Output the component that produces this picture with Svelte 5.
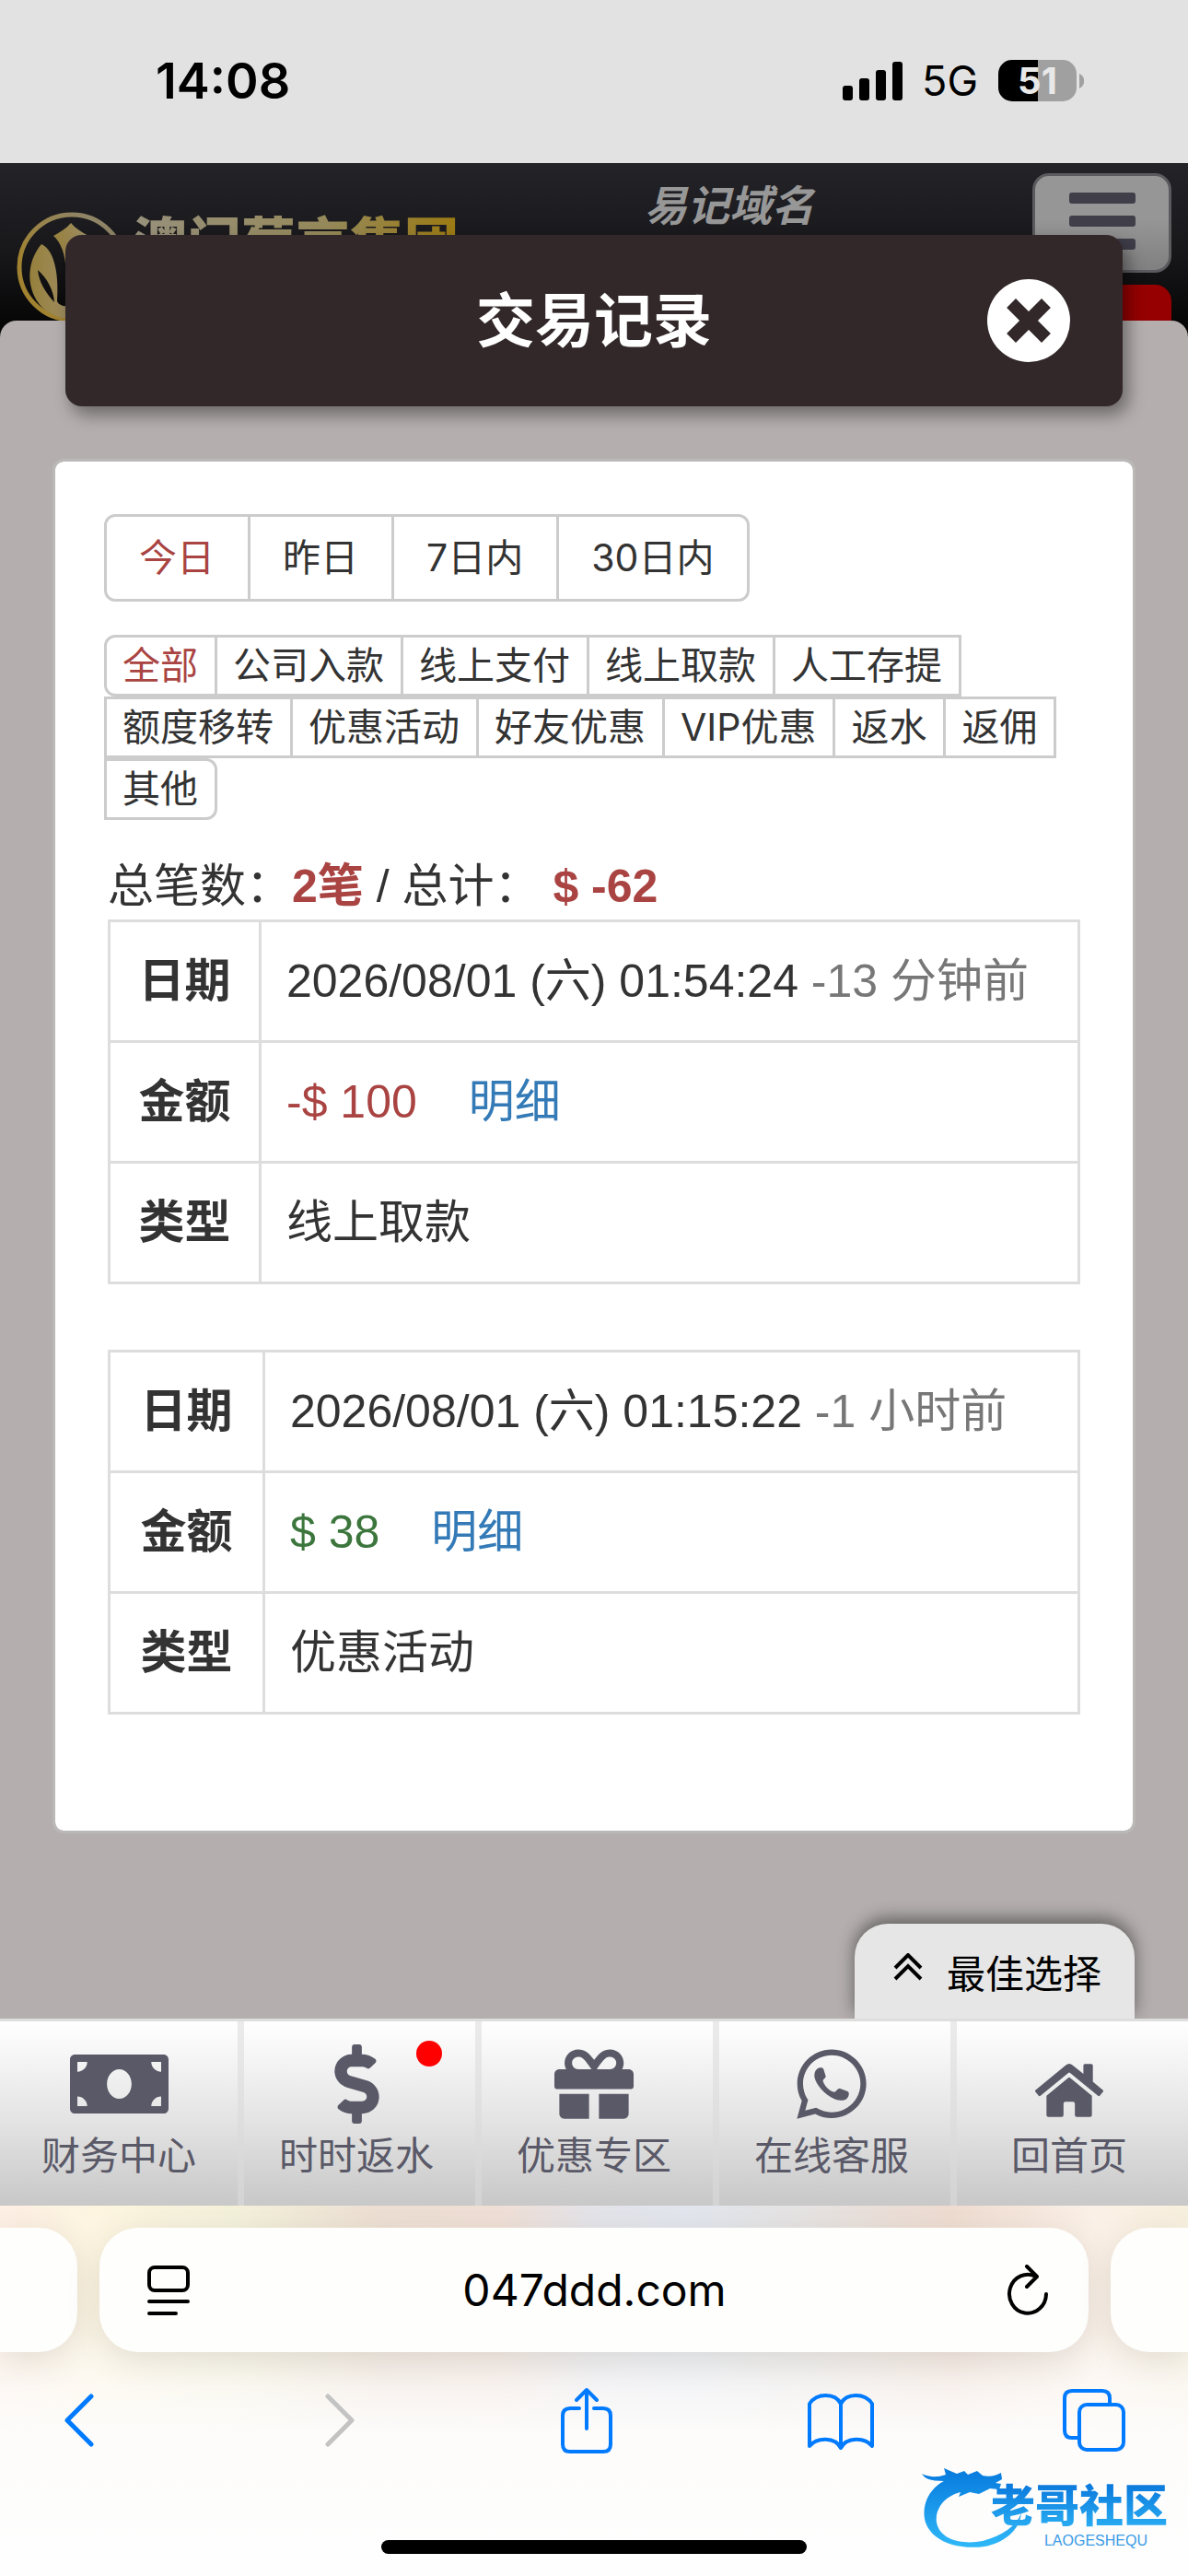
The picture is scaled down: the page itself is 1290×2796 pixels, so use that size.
<script>
  const ranges = ['今日', '昨日', '7日内', '30日内'];
  const kinds = [
    '全部', '公司入款', '线上支付', '线上取款', '人工存提',
    '额度移转', '优惠活动', '好友优惠', 'VIP优惠', '返水', '返佣', '其他'
  ];
  const records = [
    { date: '2026/08/01 (六) 01:54:24', ago: '-13 分钟前', amount: '-$ 100', out: true, type: '线上取款' },
    { date: '2026/08/01 (六) 01:15:22', ago: '-1 小时前', amount: '$ 38', out: false, type: '优惠活动' }
  ];
  let range = $state('今日');
  let kind = $state('全部');
  let address = $state('047ddd.com');
</script>

<div class="screen">
  <div class="status">
    <span class="time">14:08</span>
    <div class="signals">
      <svg class="bars" viewBox="0 0 66 42" aria-hidden="true">
        <rect x="0" y="26" width="11" height="16" rx="3" />
        <rect x="18" y="18" width="11" height="24" rx="3" />
        <rect x="36" y="9" width="11" height="33" rx="3" />
        <rect x="54" y="0" width="11" height="42" rx="3" />
      </svg>
      <span class="net">5G</span>
      <div class="battery"><span>51</span></div>
      <svg class="nub" viewBox="0 0 5 16" aria-hidden="true"><path d="M0 0C7 3 7 13 0 16Z" /></svg>
    </div>
  </div>

  <header class="site">
    <a class="brand" href="#home">
      <svg viewBox="0 0 120 120" aria-hidden="true">
        <defs>
          <linearGradient id="ring" x1="0" y1="1" x2="1" y2="0">
            <stop offset="0.3" stop-color="#a08230" />
            <stop offset="0.8" stop-color="#8f8465" />
          </linearGradient>
          <linearGradient id="leaf" x1="0" x2="1">
            <stop offset="0" stop-color="#97803c" />
            <stop offset="1" stop-color="#9f8f68" />
          </linearGradient>
        </defs>
        <circle cx="60" cy="60" r="57" fill="none" stroke="url(#ring)" stroke-width="5" />
        <path fill="url(#leaf)" d="M59 12C54 18 47 22 40 26C48 33 53 45 54 66H64C65 45 70 33 78 26C71 22 64 18 59 12Z" />
        <path fill="url(#leaf)" fill-rule="evenodd" d="M27 35C10 55 10 85 28 104C38 113 52 117 66 117V102C54 103 47 103 44 97C46 70 42 42 27 35ZM23 63C33 72 40 84 41 98C32 88 24 76 23 63Z" />
      </svg>
      <span>澳门葡京集团</span>
    </a>
    <span class="slogan">易记域名</span>
    <div class="side">
      <button class="menu" aria-label="菜单"><i></i><i></i><i></i></button>
      <div class="flag"></div>
    </div>
  </header>

  <div class="dialog-bar">
    <h1>交易记录</h1>
    <button class="close" aria-label="关闭">
      <svg viewBox="0 0 90 90" aria-hidden="true">
        <circle cx="45" cy="45" r="45" fill="#fff" />
        <path d="M31 31L59 59M59 31L31 59" stroke="#32282a" stroke-width="14" stroke-linecap="square" stroke-linejoin="round" />
      </svg>
    </button>
  </div>

  <main class="sheet">
    <section class="card">
      <div class="group days">
        {#each ranges as r}
          <button class:active={range === r} onclick={() => (range = r)}>{r}</button>
        {/each}
      </div>
      <div class="group kinds">
        {#each kinds as k}
          <button class:active={kind === k} onclick={() => (kind = k)}>{k}</button>
        {/each}
      </div>
      <p class="total">总笔数：<b>2笔</b> / 总计： <b>$ -62</b></p>
      {#each records as r}
        <table class:incoming={!r.out}>
          <tbody>
            <tr><th scope="row">日期</th><td>{r.date} <span class="ago">{r.ago}</span></td></tr>
            <tr>
              <th scope="row">金额</th>
              <td><span class={r.out ? 'out' : 'in'}>{r.amount}</span><a class="detail" href="#detail">明细</a></td>
            </tr>
            <tr><th scope="row">类型</th><td>{r.type}</td></tr>
          </tbody>
        </table>
      {/each}
    </section>
  </main>

  <nav class="tabs">
    <button class="best">
      <svg viewBox="0 0 32 30" aria-hidden="true"><path d="M2 16L16 2L30 16M2 28L16 14L30 28" fill="none" stroke="#000" stroke-width="4" /></svg>
      最佳选择
    </button>
    <a href="#finance">
      <svg class="money" viewBox="0 0 640 512" aria-hidden="true"><path d="M608 64H32C14.33 64 0 78.33 0 96v320c0 17.67 14.33 32 32 32h576c17.67 0 32-14.33 32-32V96c0-17.67-14.33-32-32-32zM48 400v-64c35.35 0 64 28.65 64 64H48zm0-224v-64h64c0 35.35-28.65 64-64 64zm272 176c-44.19 0-80-42.99-80-96 0-53.02 35.82-96 80-96s80 42.98 80 96c0 53.03-35.83 96-80 96zm272 48h-64c0-35.35 28.65-64 64-64v64zm0-224c-35.35 0-64-28.65-64-64h64v64z" /></svg>
      <span>财务中心</span>
    </a>
    <a href="#rebate">
      <svg class="dollar" viewBox="0 0 288 512" aria-hidden="true"><path d="M209.2 233.4l-108-31.6C88.7 198.2 80 186.5 80 173.5c0-16.3 13.2-29.5 29.5-29.5h66.3c12.2 0 24.2 3.7 34.2 10.5 6.1 4.1 14.3 3.1 19.5-2l34.8-34c7.1-6.9 6.1-18.4-1.8-24.5C238 74.8 207.4 64.1 176 64V16c0-8.8-7.2-16-16-16h-32c-8.8 0-16 7.2-16 16v48h-2.5C45.8 64-5.4 118.7.5 183.6c4.2 46.1 39.4 83.6 83.8 96.6l102.5 30c12.5 3.7 21.2 15.3 21.2 28.3 0 16.3-13.2 29.5-29.5 29.5h-66.3C100 368 88 364.3 78 357.5c-6.1-4.1-14.3-3.1-19.5 2l-34.8 34c-7.1 6.9-6.1 18.4 1.8 24.5 24.5 19.2 55.1 29.9 86.5 30v48c0 8.8 7.2 16 16 16h32c8.8 0 16-7.2 16-16v-48.2c46.6-.9 90.3-28.6 105.7-72.7 21.5-61.6-14.6-124.8-72.5-141.7z" /></svg>
      <span>时时返水</span>
      <i class="dot"></i>
    </a>
    <a href="#offers">
      <svg class="square" viewBox="0 0 512 512" aria-hidden="true"><path d="M32 448c0 17.7 14.3 32 32 32h160V320H32v128zm256 32h160c17.7 0 32-14.3 32-32V320H288v160zm192-320h-42.1c6.2-12.1 10.1-25.5 10.1-40 0-48.5-39.5-88-88-88-41.6 0-68.5 21.3-103 68.3-34.5-47-61.4-68.3-103-68.3-48.5 0-88 39.5-88 88 0 14.5 3.8 27.9 10.1 40H32c-17.7 0-32 14.3-32 32v80c0 8.8 7.2 16 16 16h480c8.8 0 16-7.2 16-16v-80c0-17.7-14.3-32-32-32zm-326.1 0c-22.1 0-40-17.9-40-40s17.9-40 40-40c19.9 0 34.6 3.3 86.1 80h-86.1zm206.1 0h-86.1c51.4-76.5 65.7-80 86.1-80 22.1 0 40 17.9 40 40s-17.9 40-40 40z" /></svg>
      <span>优惠专区</span>
    </a>
    <a href="#service">
      <svg class="square" viewBox="-32 0 512 512" aria-hidden="true">
        <path fill-rule="evenodd" d="M380.9 97.1C339 55.1 283.2 32 223.9 32c-122.4 0-222 99.6-222 222 0 39.1 10.2 77.3 29.6 111L0 480l117.7-30.9c32.4 17.7 68.9 27 106.1 27h.1c122.3 0 224.1-99.6 224.1-222 0-59.3-25.2-115-67.1-157zm-157 341.6c-33.2 0-65.7-8.9-94-25.7l-6.7-4-69.8 18.3L72 359.2l-4.4-7c-18.5-29.4-28.2-63.3-28.2-98.2 0-101.7 82.8-184.5 184.6-184.5 49.3 0 95.6 19.2 130.4 54.1 34.8 34.9 56.2 81.2 56.1 130.5 0 101.8-84.9 184.6-186.6 184.6z" />
        <path d="M128 160C140 147 166 148 171 158L186 206C188 216 168 226 168 236C176 262 206 300 240 308C252 308 262 284 276 284L328 304C342 312 336 340 320 352C300 366 262 364 236 350C180 322 124 262 114 214C110 190 116 170 128 160Z" />
      </svg>
      <span>在线客服</span>
    </a>
    <a href="#home">
      <svg class="home" viewBox="0 0 576 512" aria-hidden="true"><path d="M280.37 148.26L96 300.11V464a16 16 0 0 0 16 16l112.06-.29a16 16 0 0 0 15.92-16V368a16 16 0 0 1 16-16h64a16 16 0 0 1 16 16v95.64a16 16 0 0 0 16 16.05L464 480a16 16 0 0 0 16-16V300L295.67 148.26a12.19 12.19 0 0 0-15.3 0zM571.6 251.47L488 182.56V44.05a12 12 0 0 0-12-12h-56a12 12 0 0 0-12 12v72.61L318.47 43a48 48 0 0 0-61 0L4.34 251.47a12 12 0 0 0-1.6 16.9l25.5 31A12 12 0 0 0 45.15 301l235.22-193.74a12.19 12.19 0 0 1 15.3 0L530.9 301a12 12 0 0 0 16.9-1.6l25.5-31a12 12 0 0 0-1.7-16.93z" /></svg>
      <span>回首页</span>
    </a>
  </nav>

  <footer class="browser">
    <div class="pages">
      <div class="stub left"></div>
      <div class="url">
        <button aria-label="阅读器">
          <svg width="46" height="54" viewBox="0 0 46 54" fill="none" stroke="#000" stroke-width="4" stroke-linecap="round" aria-hidden="true"><rect x="2" y="2" width="42" height="25" rx="6" /><path d="M2 39H44M2 52H31" /></svg>
        </button>
        <input aria-label="网址" bind:value={address} />
        <button aria-label="刷新">
          <svg width="46" height="56" viewBox="0 0 46 56" fill="none" stroke="#000" stroke-width="4" stroke-linecap="round" stroke-linejoin="round" aria-hidden="true"><path d="M43 32A20 21 0 1 1 32 13M22 2L33 13L22 24" /></svg>
        </button>
      </div>
      <div class="stub right"></div>
    </div>
    <div class="tools">
      <button aria-label="后退"><svg width="32" height="72" viewBox="0 0 32 72"><path d="M29 10L3 36L29 62" stroke-width="5" /></svg></button>
      <button class="off" aria-label="前进" disabled><svg width="46" height="72" viewBox="-14 0 46 72"><path d="M3 10L29 36L3 62" stroke-width="5" /></svg></button>
      <button aria-label="分享"><svg width="56" height="72" viewBox="0 0 56 72"><path d="M20 23H10Q2 23 2 31V62Q2 70 10 70H46Q54 70 54 62V31Q54 23 46 23H36M28 45V3M17 14L28 3L39 14" /></svg></button>
      <button aria-label="书签"><svg width="72" height="72" viewBox="0 0 72 72"><path d="M36 18C30 6 10 6 2 18V64C10 54 30 54 36 66C42 54 62 54 70 64V18C62 6 42 6 36 18V65" /></svg></button>
      <button aria-label="标签页"><svg width="68" height="72" viewBox="0 0 68 72"><path d="M16 55H10Q2 55 2 47V12Q2 4 10 4H43Q51 4 51 12V18" /><rect x="18" y="19" width="48" height="49" rx="8" /></svg></button>
    </div>
    <div class="indicator"></div>
    <div class="mark">
      <svg viewBox="0 0 110 90" aria-hidden="true">
        <defs><linearGradient id="sea" x1="0" y1="0" x2="0" y2="1"><stop offset="0.1" stop-color="#0a7fe0" /><stop offset="1" stop-color="#2fb8f8" /></linearGradient></defs>
        <path fill="url(#sea)" d="M0 9C8 13 18 13 26 10L24 3L38 9L46 6L50 10L60 6L66 11C74 13 80 11 86 8L87 15L80 19L86 20L84 26L74 25L62 31L52 29L40 34L42 29C22 34 14 50 16 62C20 82 46 86 66 82C88 76 102 66 108 52C106 70 90 84 68 88C38 92 8 82 3 58C0 40 10 24 24 17C14 17 4 16 0 9Z" />
      </svg>
      <div><strong>老哥社区</strong><small>LAOGESHEQU</small></div>
    </div>
  </footer>
</div>

<style>
  :global(body) { margin: 0; }
  .screen {
    position: relative;
    display: flex;
    flex-direction: column;
    min-height: 100vh;
    overflow: hidden;
    color: #333;
    background: #fff;
    font-family: "Liberation Sans", "Noto Sans CJK SC", sans-serif;
    font-size: 50px;
  }
  button, input { font: inherit; color: inherit; margin: 0; padding: 0; border: 0; background: none; }
  a { color: inherit; text-decoration: none; }
  svg { display: block; flex: none; }

  .status {
    display: flex;
    justify-content: space-between;
    box-sizing: border-box;
    height: 177px;
    padding: 0 113px 2px 169px;
    align-items: center;
    background: #e2e2e2;
    color: #000;
    font-family: Inter, sans-serif;
  }
  .time { font-size: 54px; font-weight: 600; }
  .signals { display: flex; align-items: center; }
  .bars { width: 66px; height: 42px; }
  .net { margin: 0 22px 0 20px; font-size: 45px; }
  .battery {
    width: 85px;
    height: 45px;
    border-radius: 15px;
    background: linear-gradient(90deg, #000 51%, #a0a0a0 51%);
    color: #e8e8e8;
    font-size: 40px;
    font-weight: 700;
    line-height: 45px;
    text-align: center;
  }
  .nub { width: 5px; height: 16px; margin-left: 3px; fill: #a0a0a0; }

  .site {
    display: grid;
    grid-template-columns: repeat(3, minmax(0, 1fr));
    height: 189px;
    background: linear-gradient(#242328, #18181b 50%, #050505 95%);
  }
  .brand { display: flex; align-items: flex-start; gap: 6px; padding: 53px 0 0 18px; white-space: nowrap; }
  .brand svg { width: 120px; height: 120px; }
  .brand span {
    font: 900 59px/60px "Noto Sans CJK SC", sans-serif;
    background: linear-gradient(90deg, #98917c, #95895a 60%, #9c7a12);
    background-clip: text;
    color: transparent;
  }
  .slogan {
    padding: 12px 0 0 270px;
    font: italic 700 46px/62px "Noto Sans CJK SC", sans-serif;
    color: #979797;
    white-space: nowrap;
  }
  .side { display: flex; flex-direction: column; align-items: flex-end; gap: 13px; padding: 11px 18px 0 0; }
  .menu {
    display: flex;
    flex-direction: column;
    align-items: center;
    gap: 13px;
    box-sizing: border-box;
    width: 151px;
    height: 108px;
    padding-top: 18px;
    border: 3px solid #5b5b5f;
    border-radius: 18px;
    background: linear-gradient(#969696 45%, #808080);
  }
  .menu i { width: 72px; height: 12px; border-radius: 3px; background: #3f3e49; }
  .flag { width: 151px; flex: 1; border-radius: 18px 18px 0 0; background: #960000; }

  .dialog-bar {
    position: absolute;
    top: 255px;
    left: 71px;
    right: 71px;
    display: grid;
    grid-template-columns: 1fr auto 1fr;
    align-items: center;
    height: 186px;
    border-radius: 18px;
    background: #32282a;
    box-shadow: 6px 9px 18px rgba(0, 0, 0, 0.4);
  }
  h1 { grid-column: 2; margin: 0; padding-bottom: 10px; color: #fff; font: 700 64px/92px "Noto Sans CJK SC", sans-serif; }
  .close { justify-self: end; margin-right: 57px; }
  .close svg { width: 90px; height: 90px; }

  .sheet {
    flex: 1;
    margin-top: -18px;
    padding: 150px 57px;
    border-radius: 18px 18px 0 0;
    background: #b4aeae;
  }
  .card {
    padding: 57px 57px 126px;
    border: 3px solid #bbb8b8;
    border-radius: 12px;
    background: #fff;
    background-clip: padding-box;
  }
  .group { display: flex; flex-wrap: wrap; margin-left: -4px; padding-left: 3px; }
  .group button {
    margin-left: -3px;
    padding: 0 18px 0 17px;
    border: 3px solid #ccc;
    font: 41px/61px Inter, "Noto Sans CJK SC", sans-serif;
  }
  .group.days button { padding: 0 36px 0 35px; line-height: 89px; }
  .group button:first-child { border-radius: 12px 0 0 12px; }
  .group button:last-child { border-radius: 0 12px 12px 0; }
  .group .active { color: #a94442; }
  .kinds { margin-top: 36px; }
  .total { margin: 36px 0 0; line-height: 72px; white-space: pre-wrap; }
  .total b { color: #a94442; }

  table { width: 100%; border-collapse: collapse; table-layout: fixed; }
  table + table { margin-top: 71px; }
  th, td { box-sizing: border-box; height: 131px; padding: 0; border: 3px solid #ddd; line-height: 72px; }
  th { width: 164px; text-align: center; }
  .incoming th { width: 168px; }
  td { padding-left: 27px; text-align: left; white-space: nowrap; }
  .ago { color: #777; }
  .out { color: #a94442; }
  .in { color: #3c763d; }
  .detail { margin-left: 56px; color: #337ab7; }

  .tabs {
    position: relative;
    display: grid;
    grid-template-columns: repeat(5, 1fr);
    height: 200px;
    border-top: 3px solid #dedede;
    background: linear-gradient(#fff, #e3e3e3 55%, #c8c8c8);
    color: #5a5968;
    font: 42px/56px "Noto Sans CJK SC", sans-serif;
  }
  .tabs a {
    position: relative;
    display: grid;
    grid-template-rows: 115px 56px;
    justify-items: center;
    align-items: end;
  }
  .tabs a + a { background: linear-gradient(#ebebeb, #d3d3d3) left / 7px 100% no-repeat; }
  .tabs a svg { fill: #5a5968; }
  .money { width: 107px; height: 86px; margin-bottom: 4px; }
  .dollar { width: 49px; height: 86px; margin-bottom: 4px; }
  .square { width: 86px; height: 86px; margin-bottom: 4px; }
  .home { width: 74px; height: 66px; margin-bottom: 7px; }
  .dot { position: absolute; top: 21px; right: 36px; width: 28px; height: 28px; border-radius: 50%; background: #f00; }
  .tabs .best {
    position: absolute;
    right: 58px;
    bottom: 203px;
    display: flex;
    align-items: center;
    gap: 26px;
    height: 103px;
    padding: 0 36px 0 42px;
    border-radius: 36px 36px 0 0;
    background: #e6e6e6;
    color: #000;
    box-shadow: 0 -6px 18px rgba(0, 0, 0, 0.45);
    clip-path: inset(-40px -40px 0 -40px);
  }
  .best svg { width: 32px; height: 30px; margin-bottom: 10px; }

  .browser {
    position: relative;
    height: 402px;
    background:
      linear-gradient(rgba(253, 253, 253, 0), rgba(253, 253, 253, 0.2) 30%, #fdfcfb 62%, #fefefe),
      linear-gradient(90deg, #fdefe4, #fdf5e0 8%, #f4f1db 20%, #eddfd3 32%, #f0dfd6 42%, #e4e4ea 50%, #e2e6ee 58%, #e6e3e2 68%, #efdcd1 80%, #fbf0e6 92%, #f8f0de);
  }
  .pages { display: flex; gap: 24px; padding-top: 24px; }
  .url, .stub { height: 135px; background: #fefefc; box-shadow: 0 9px 36px rgba(80, 70, 50, 0.14); }
  .stub { flex: 0 0 84px; }
  .left { border-radius: 0 42px 42px 0; }
  .right { border-radius: 42px 0 0 42px; }
  .url { flex: 1; min-width: 0; display: flex; align-items: center; padding: 0 43px 0 52px; border-radius: 42px; }
  .url input { flex: 1; min-width: 0; padding-right: 8px; color: #000; font: 48px/64px Inter, sans-serif; text-align: center; }
  .tools { display: flex; justify-content: space-between; align-items: center; padding: 38px 66px 0 50px; }
  .tools button { display: flex; justify-content: center; width: 72px; }
  .tools svg { fill: none; stroke: #007aff; stroke-width: 4; stroke-linecap: round; stroke-linejoin: round; }
  .tools .off svg { stroke: #c3c3c3; }
  .indicator { width: 462px; height: 15px; margin: 94px auto 0; border-radius: 8px; background: #000; }
  .mark { position: absolute; right: 22px; bottom: 30px; }
  .mark svg { position: absolute; right: 157px; bottom: 0; width: 110px; height: 90px; }
  .mark div { position: relative; display: flex; flex-direction: column; align-items: flex-end; }
  .mark strong {
    font: 900 48px/68px "Noto Sans CJK SC", sans-serif;
    background: linear-gradient(#0a78dc 20%, #2db4f5);
    background-clip: text;
    color: transparent;
  }
  .mark small { margin-right: 22px; font-size: 16px; line-height: 16px; color: #3a9be6; }
</style>
